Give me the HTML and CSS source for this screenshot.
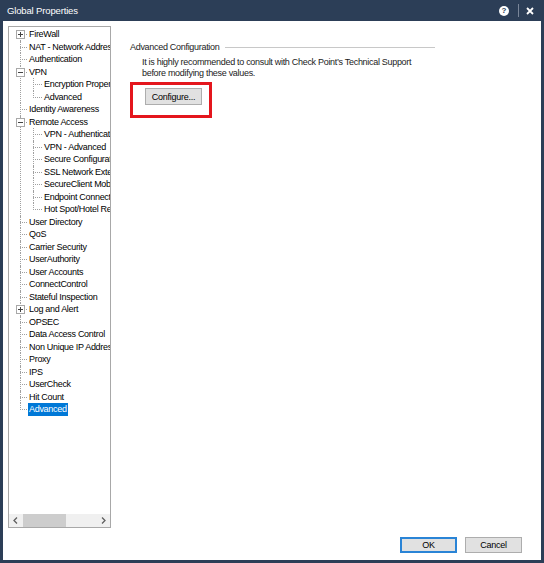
FILE: index.html
```html
<!DOCTYPE html>
<html lang="en">
<head>
    <meta charset="UTF-8">
    <title>Global Properties</title>
    <link rel="stylesheet" href="styles.css">
</head>
<body>
    <div class="window">
        <div class="titlebar">
            <span class="title">Global Properties</span>
            <div class="title-actions">
                <span class="help">?</span>
                <span class="title-sep"></span>
                <svg class="close" width="8" height="8" viewBox="0 0 8 8"><path d="M1 1L7 7M7 1L1 7" stroke="#fff" stroke-width="1.8"/></svg>
            </div>
        </div>

        <div class="client">
            <div class="main">
                <div class="tree-panel">
                    <div class="tree">
                        <ul class="root">
                            <li><svg class="exp" viewBox="0 0 9 9"><rect x=".5" y=".5" width="8" height="8" fill="#fff" stroke="#a8a8a8"/><path d="M2 4.5h5M4.5 2v5" stroke="#444"/></svg><span class="label">FireWall</span></li>
                            <li><span class="label">NAT - Network Address Translation</span></li>
                            <li><span class="label">Authentication</span></li>
                            <li><svg class="exp" viewBox="0 0 9 9"><rect x=".5" y=".5" width="8" height="8" fill="#fff" stroke="#a8a8a8"/><path d="M2 4.5h5" stroke="#444"/></svg><span class="label">VPN</span>
                                <ul>
                                    <li><span class="label">Encryption Properties</span></li>
                                    <li><span class="label">Advanced</span></li>
                                </ul>
                            </li>
                            <li><span class="label">Identity Awareness</span></li>
                            <li><svg class="exp" viewBox="0 0 9 9"><rect x=".5" y=".5" width="8" height="8" fill="#fff" stroke="#a8a8a8"/><path d="M2 4.5h5" stroke="#444"/></svg><span class="label">Remote Access</span>
                                <ul>
                                    <li><span class="label">VPN - Authentication and Encryption</span></li>
                                    <li><span class="label">VPN - Advanced</span></li>
                                    <li><span class="label">Secure Configuration Verification</span></li>
                                    <li><span class="label">SSL Network Extender</span></li>
                                    <li><span class="label">SecureClient Mobile</span></li>
                                    <li><span class="label">Endpoint Connect</span></li>
                                    <li><span class="label">Hot Spot/Hotel Registration</span></li>
                                </ul>
                            </li>
                            <li><span class="label">User Directory</span></li>
                            <li><span class="label">QoS</span></li>
                            <li><span class="label">Carrier Security</span></li>
                            <li><span class="label">UserAuthority</span></li>
                            <li><span class="label">User Accounts</span></li>
                            <li><span class="label">ConnectControl</span></li>
                            <li><span class="label">Stateful Inspection</span></li>
                            <li><svg class="exp" viewBox="0 0 9 9"><rect x=".5" y=".5" width="8" height="8" fill="#fff" stroke="#a8a8a8"/><path d="M2 4.5h5M4.5 2v5" stroke="#444"/></svg><span class="label">Log and Alert</span></li>
                            <li><span class="label">OPSEC</span></li>
                            <li><span class="label">Data Access Control</span></li>
                            <li><span class="label">Non Unique IP Address Ranges</span></li>
                            <li><span class="label">Proxy</span></li>
                            <li><span class="label">IPS</span></li>
                            <li><span class="label">UserCheck</span></li>
                            <li><span class="label">Hit Count</span></li>
                            <li><span class="label selected">Advanced</span></li>
                        </ul>
                    </div>
                    <div class="hscroll">
                        <span class="arrow"><svg width="5" height="7" viewBox="0 0 5 7"><path d="M4 0.5L1 3.5L4 6.5" fill="none" stroke="#606060" stroke-width="1.3"/></svg></span>
                        <span class="track"><span class="thumb"></span></span>
                        <span class="arrow"><svg width="5" height="7" viewBox="0 0 5 7"><path d="M1 0.5L4 3.5L1 6.5" fill="none" stroke="#606060" stroke-width="1.3"/></svg></span>
                    </div>
                </div>

                <div class="pane">
                    <div class="group-title">
                        <span>Advanced Configuration</span>
                        <span class="rule"></span>
                    </div>
                    <p class="note">It is highly recommended to consult with Check Point’s Technical Support<br>before modifying these values.</p>
                    <div class="highlight">
                        <button class="btn">Configure...</button>
                    </div>
                </div>
            </div>

            <div class="footer">
                <button class="btn default">OK</button>
                <button class="btn">Cancel</button>
            </div>
        </div>
    </div>
</body>
</html>
```

FILE: styles.css
```css
* {
    box-sizing: border-box;
}
body {
    margin: 0;
    background: #2c3e57;
    font-family: "Liberation Sans", Arial, sans-serif;
    font-size: 9px;
    letter-spacing: -0.3px;
    color: #000;
}
.window {
    width: 544px;
    height: 563px;
    display: flex;
    flex-direction: column;
}
.titlebar {
    height: 21px;
    display: flex;
    align-items: center;
    justify-content: space-between;
    padding: 0 10px 0 7px;
    color: #fff;
}
.title {
    font-size: 9.5px;
    letter-spacing: -0.15px;
}
.title-actions {
    display: flex;
    align-items: center;
}
.help {
    width: 10px;
    height: 10px;
    border-radius: 50%;
    background: #fff;
    color: #2c3e57;
    font-weight: bold;
    font-size: 8px;
    line-height: 10px;
    text-align: center;
    letter-spacing: 0;
}
.title-sep {
    width: 1px;
    height: 13px;
    background: #7a8699;
    margin: 0 7px 0 9px;
}
.close {
    display: block;
}
.client {
    flex: 1;
    margin: 0 3px 3px;
    background: #fff;
    padding: 5px 19px 7px 5px;
    display: flex;
    flex-direction: column;
}
.main {
    display: flex;
    height: 502px;
}
.tree-panel {
    width: 103px;
    border: 1px solid #a8a8a8;
    display: flex;
    flex-direction: column;
}
.tree {
    flex: 1;
    overflow: hidden;
    padding-top: 1px;
}
.tree ul {
    list-style: none;
    margin: 0;
    padding: 0;
}
.tree li {
    position: relative;
    padding-left: 19px;
    white-space: nowrap;
}
.tree li::before {
    content: "";
    position: absolute;
    left: 11px;
    top: 0;
    bottom: 0;
    border-left: 1px dotted #a0a0a0;
}
.tree li::after {
    content: "";
    position: absolute;
    left: 11px;
    top: 6px;
    width: 7px;
    border-top: 1px dotted #a0a0a0;
}
.tree .root > li:first-child::before {
    top: 6px;
}
.tree li:last-child::before {
    bottom: auto;
    height: 7px;
}
.tree ul ul li {
    padding-left: 15px;
}
.tree ul ul li::before,
.tree ul ul li::after {
    left: 5px;
}
.tree ul ul li::after {
    width: 9px;
}
.exp {
    position: absolute;
    left: 7px;
    top: 2px;
    width: 9px;
    height: 9px;
    z-index: 1;
}
.label {
    display: inline-block;
    height: 12.5px;
    line-height: 12.5px;
    padding: 0 1px;
}
.label.selected {
    background: #0078d7;
    color: #fff;
}
.hscroll {
    height: 13px;
    background: #f0f0f0;
    display: flex;
    align-items: center;
}
.arrow {
    width: 13px;
    display: flex;
    justify-content: center;
}
.track {
    flex: 1;
    height: 100%;
    padding: 0 1px;
}
.thumb {
    display: block;
    width: 43px;
    height: 100%;
    background: #cdcdcd;
}
.pane {
    margin-left: 19px;
    padding-top: 15px;
    width: 305px;
}
.group-title {
    display: flex;
    align-items: center;
    height: 12px;
    color: #222;
}
.rule {
    flex: 1;
    height: 1px;
    background: #c8c8c8;
    margin-left: 6px;
}
.note {
    margin: 4px 0 0 12px;
    line-height: 11px;
    white-space: nowrap;
    color: #222;
}
.highlight {
    display: inline-block;
    margin-top: 3px;
    border: 3px solid #e4161d;
    padding: 3px 7px 10px 12px;
}
.btn {
    width: 57px;
    height: 17px;
    padding: 0;
    border: 1px solid #adadad;
    background: #e1e1e1;
    font-family: inherit;
    font-size: 9px;
    letter-spacing: -0.25px;
    color: #000;
}
.footer {
    margin-top: 9px;
    display: flex;
    justify-content: flex-end;
    gap: 8px;
}
.footer .btn {
    height: 16px;
}
.btn.default {
    border: 2px solid #2a84d6;
}
```
